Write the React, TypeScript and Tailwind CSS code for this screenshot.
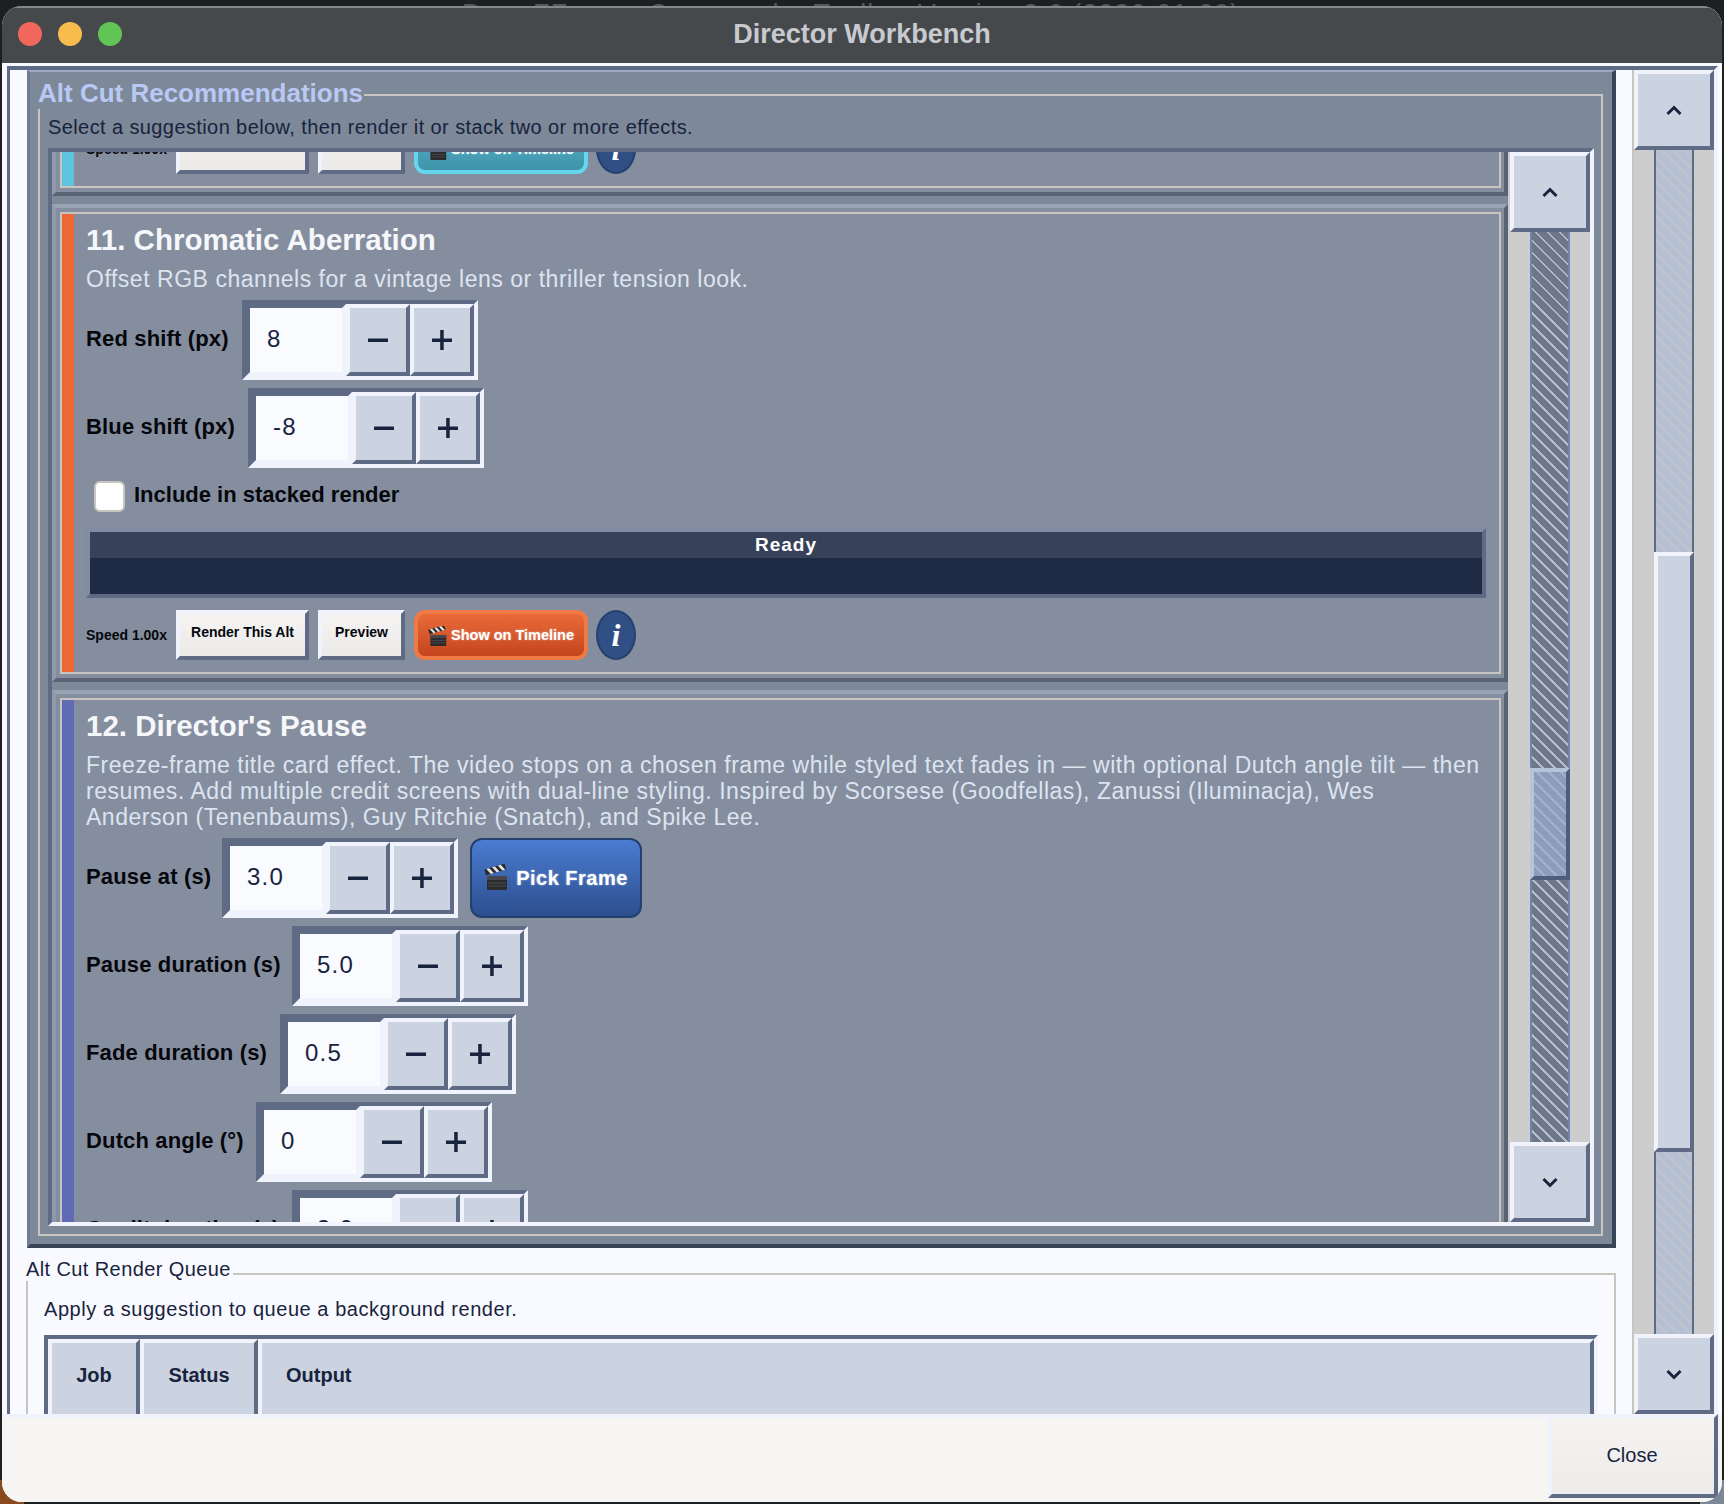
import type { ReactNode } from 'react'

const raised = 'border-4 border-t-[#f0f3fb] border-l-[#f0f3fb] border-r-[#5f6b85] border-b-[#5f6b85]'
const sunken = 'border-4 border-t-[#5f6b85] border-l-[#5f6b85] border-r-[#f0f3fb] border-b-[#f0f3fb]'

function Chevron({ down }: { down?: boolean }) {
  return (
    <svg width="16" height="11" viewBox="0 0 16 11" fill="none">
      <polyline
        points={down ? '1.5,2 8,8.5 14.5,2' : '1.5,9 8,2.5 14.5,9'}
        stroke="#18233d"
        strokeWidth="3"
      />
    </svg>
  )
}

function Clapper({ w, h }: { w: number; h: number }) {
  return (
    <svg width={w} height={h} viewBox="0 0 24 26" className="shrink-0">
      <g transform="rotate(-16 3 10)">
        <rect x="2" y="4" width="21" height="6" fill="#2a2a2c" />
        <path d="M4 4h3l3 6H7zM10 4h3l3 6h-3zM16 4h3l3 6h-3z" fill="#e4e4e4" />
      </g>
      <rect x="3" y="11" width="20" height="14" rx="1" fill="#2b2b2e" />
      <rect x="3" y="11" width="20" height="4" fill="#47474b" />
      <path d="M4 18h18M4 21h18" stroke="#56565a" strokeWidth="0.8" />
    </svg>
  )
}

function SpinBox({ value }: { value: string }) {
  return (
    <div className={`flex h-[80px] w-[236px] shrink-0 ${sunken}`}>
      <div className={`flex w-[100px] items-center pb-[2px] pl-[17px] text-[24px] tracking-[1.2px] text-[#18233d] bg-[#f9fbff] ${sunken}`}>
        {value}
      </div>
      <div className={`flex w-[64px] items-center justify-center bg-[#cbd3e0] ${raised}`}>
        <svg width="20" height="20" viewBox="0 0 20 20">
          <rect x="0" y="8.5" width="20" height="3.5" fill="#18233d" />
        </svg>
      </div>
      <div className={`flex w-[64px] items-center justify-center bg-[#cbd3e0] ${raised}`}>
        <svg width="20" height="20" viewBox="0 0 20 20">
          <rect x="0" y="8.5" width="20" height="3.5" fill="#18233d" />
          <rect x="8.2" y="0" width="3.5" height="20" fill="#18233d" />
        </svg>
      </div>
    </div>
  )
}

function SpinRow({ label, value, labelW, extra }: { label: string; value: string; labelW: string; extra?: ReactNode }) {
  return (
    <div className="flex items-center">
      <div className={`${labelW} shrink-0 pb-[4px] text-[22px] font-bold tracking-[0.15px] text-[#05070c]`}>{label}</div>
      <SpinBox value={value} />
      {extra}
    </div>
  )
}

function ActionRow({ timelineClass }: { timelineClass: string }) {
  return (
    <div className="flex h-[50px] items-center">
      <div className="w-[90px] shrink-0 text-[14px] font-bold text-[#05070c]">Speed 1.00x</div>
      <div className={`flex h-[50px] w-[133px] items-center justify-center bg-gradient-to-b from-[#f5f4f2] to-[#ebeae8] pb-[5px] text-[14px] font-bold text-[#05070c] ${raised}`}>
        Render This Alt
      </div>
      <div className={`ml-[9px] flex h-[50px] w-[87px] items-center justify-center bg-gradient-to-b from-[#f5f4f2] to-[#ebeae8] pb-[5px] text-[14px] font-bold text-[#05070c] ${raised}`}>
        Preview
      </div>
      <div className={`ml-[9px] flex h-[50px] w-[174px] items-center justify-center gap-[4px] rounded-[11px] border-[4px] pt-[2px] text-[14.5px] font-bold text-white [text-shadow:0_0_2px_rgba(255,255,255,0.6)] ${timelineClass}`}>
        <Clapper w={19} h={21} />
        Show on Timeline
      </div>
      <div className="ml-[8px] flex h-[50px] w-[40px] items-center justify-center rounded-[50%] border-2 border-[#26406f] bg-[#2f4f85] font-['Liberation_Serif',serif] text-[32px] font-bold italic leading-none text-white">
        i
      </div>
    </div>
  )
}

function Card({ accent, children, className }: { accent: string; children: ReactNode; className?: string }) {
  return (
    <div className={`border-4 border-t-[#9aa3b3] border-l-[#8f99a9] border-r-[#5a6373] border-b-[#5a6373] bg-[#858e9e] p-[4px] pr-[3px] ${className ?? ''}`}>
      <div className="flex h-full border-2 border-[#c8c4be]">
        <div className={`w-[12px] shrink-0 ${accent}`} />
        <div className="flex min-w-0 flex-1 flex-col pl-[12px] pr-[13px]">{children}</div>
      </div>
    </div>
  )
}

function ScrollBar({
  upper,
  thumb,
  lower,
  groove,
  thumbClass,
}: {
  upper: string
  thumb: string
  lower: string
  groove: string
  thumbClass: string
}) {
  return (
    <div className="flex h-full w-[80px] shrink-0 flex-col items-center bg-[#cdcdcd]">
      <div className={`flex h-[80px] w-[80px] shrink-0 items-center justify-center bg-[#cbd3e0] ${raised}`}>
        <Chevron />
      </div>
      <div className={`${upper} w-[40px] shrink-0 border-x-2 ${groove}`} />
      <div className={`${thumb} w-[40px] shrink-0 border-4 ${thumbClass}`} />
      <div className={`${lower} w-[40px] shrink-0 border-x-2 ${groove}`} />
      <div className={`flex h-[80px] w-[80px] shrink-0 items-center justify-center bg-[#cbd3e0] ${raised}`}>
        <Chevron down />
      </div>
    </div>
  )
}

const innerGroove =
  'border-[#6f84ad] bg-[repeating-linear-gradient(45deg,#6d7788_0px,#6d7788_6.5px,#b4bdcb_6.5px,#b4bdcb_8.5px)]'
const outerGroove =
  'border-[#5f6b85] bg-[repeating-linear-gradient(45deg,#b5c1d3_0px,#b5c1d3_6.5px,#bfc4cf_6.5px,#bfc4cf_8.5px)]'

export default function App() {
  return (
    <div className="relative h-[1504px] w-[1724px] overflow-hidden bg-[#1d2023] font-['Liberation_Sans',sans-serif]">
      <div className="absolute bottom-0 left-0 h-[24px] w-[24px] bg-[#8a4a1c]" />
      <div className="absolute bottom-0 right-0 h-[24px] w-[24px] bg-[#7b8794]" />
      <div className="absolute left-[462px] top-[1px] whitespace-nowrap text-[27px] leading-none tracking-[1px] text-[#55585b]">
        Dorn FFmpeg Commander Toolbar Version 2.6 (2026-01-09)
      </div>

      <div className="absolute bottom-[2px] left-[2px] right-[2px] top-[6px] flex flex-col overflow-hidden rounded-[20px] bg-[#f8faff]">
        {/* title bar */}
        <div className="relative flex h-[57px] shrink-0 items-center justify-center border-t-2 border-[#85888a] bg-[#45494c] pb-[3px]">
          <div className="absolute left-[16px] top-[14px] flex gap-[16px]">
            <div className="h-[24px] w-[24px] rounded-full bg-[#f1675c]" />
            <div className="h-[24px] w-[24px] rounded-full bg-[#f6bc4c]" />
            <div className="h-[24px] w-[24px] rounded-full bg-[#62c454]" />
          </div>
          <div className="text-[27px] font-bold text-[#c8cad0]">Director Workbench</div>
        </div>

        {/* main scroll frame */}
        <div className="ml-[5px] mr-[4px] mt-[3px] flex h-[1348px] shrink-0 overflow-hidden border-l-[3px] border-r-4 border-t-4 border-l-[#5f6b85] border-r-[#f0f3fb] border-t-[#5f6b85]">
          <div className="w-[1622px] shrink-0 pl-[17px]">
            {/* recommendations panel */}
            <div className="flex h-[1178px] w-[1589px] flex-col border-b-4 border-l-[3px] border-r-4 border-t-2 border-b-[#3a4459] border-l-[#6f7c94] border-r-[#3a4459] border-t-[#9aa8c2] bg-[#7d8898] pl-[8px] pr-[9px] pt-[22px]">
              <div className="relative h-[1142px] w-[1565px] border-2 border-[#c8c4be] pl-[8px]">
                <div className="absolute -left-[2px] -top-[17px] bg-[#7d8898] pb-[2px] pr-px text-[26px] font-bold leading-[28px] text-[#b9c8f5]">
                  Alt Cut Recommendations
                </div>
                <div className="pt-[19px] text-[20px] leading-[24px] tracking-[0.4px] text-[#18233d]">
                  Select a suggestion below, then render it or stack two or more effects.
                </div>
                <div className={`mt-[9px] flex h-[1078px] w-[1546px] ${sunken}`}>
                  <div className="w-[1458px] shrink-0 overflow-hidden bg-[#cdcdcd]">
                    <div className="-mt-[100px] flex w-[1456px] flex-col gap-[8px] bg-[#7d8898]">
                      <Card accent="bg-[#5ec3de]" className="h-[144px]">
                        <div className="mt-auto pb-[12px]">
                          <ActionRow timelineClass="border-[#66d6ee] bg-gradient-to-b from-[#54b4cb] to-[#3f93a9]" />
                        </div>
                      </Card>

                      <Card accent="bg-[#ee6636]" className="h-[478px]">
                        <div className="mt-[10px] h-[32px] text-[29.5px] font-bold leading-[32px] text-[#f5f7fb]">
                          11. Chromatic Aberration
                        </div>
                        <div className="mt-[10px] text-[23px] leading-[26px] tracking-[0.53px] text-[#dde4f0]">
                          Offset RGB channels for a vintage lens or thriller tension look.
                        </div>
                        <div className="mt-[8px] flex flex-col gap-[8px]">
                          <SpinRow label="Red shift (px)" value="8" labelW="w-[156px]" />
                          <SpinRow label="Blue shift (px)" value="-8" labelW="w-[162px]" />
                        </div>
                        <div className="mt-[13px] flex h-[31px] items-center pl-[8px]">
                          <div className="h-[31px] w-[31px] rounded-[6px] border-2 border-[#c8c4be] bg-white" />
                          <div className="ml-[9px] pb-[4px] text-[22px] font-bold text-[#05070c]">Include in stacked render</div>
                        </div>
                        <div className="mt-[16px] h-[70px] border-4 border-t-[#7f8ca3] border-l-[#7f8ca3] border-r-[#5f6b85] border-b-[#5f6b85] bg-[#1f2a44]">
                          <div className="flex h-[26px] items-center justify-center bg-[#374159] text-[19px] font-bold tracking-[1px] text-white">
                            Ready
                          </div>
                        </div>
                        <div className="mt-[12px]">
                          <ActionRow timelineClass="border-[#f07a45] bg-gradient-to-b from-[#ea6a38] to-[#c4451e]" />
                        </div>
                      </Card>

                      <Card accent="bg-[#5f6bb5]" className="h-[700px]">
                        <div className="mt-[10px] h-[32px] text-[29.5px] font-bold leading-[32px] text-[#f5f7fb]">
                          12. Director's Pause
                        </div>
                        <div className="mt-[10px] text-[23px] leading-[26px] tracking-[0.53px] text-[#dde4f0]">
                          Freeze-frame title card effect. The video stops on a chosen frame while styled text fades in — with optional Dutch angle tilt — then
                          <br />
                          resumes. Add multiple credit screens with dual-line styling. Inspired by Scorsese (Goodfellas), Zanussi (Iluminacja), Wes
                          <br />
                          Anderson (Tenenbaums), Guy Ritchie (Snatch), and Spike Lee.
                        </div>
                        <div className="mt-[8px] flex flex-col gap-[8px]">
                          <SpinRow
                            label="Pause at (s)"
                            value="3.0"
                            labelW="w-[136px]"
                            extra={
                              <div className="ml-[12px] flex h-[80px] w-[172px] items-center justify-center gap-[8px] rounded-[12px] border-2 border-[#24406f] bg-gradient-to-b from-[#4b7cd2] to-[#2c4f8f] text-[20px] font-bold tracking-[0.5px] text-white [text-shadow:0_0_2px_rgba(255,255,255,0.6)]">
                                <Clapper w={24} h={28} />
                                Pick Frame
                              </div>
                            }
                          />
                          <SpinRow label="Pause duration (s)" value="5.0" labelW="w-[206px]" />
                          <SpinRow label="Fade duration (s)" value="0.5" labelW="w-[194px]" />
                          <SpinRow label="Dutch angle (°)" value="0" labelW="w-[170px]" />
                          <SpinRow label="Credit duration (s)" value="3.0" labelW="w-[206px]" />
                        </div>
                      </Card>
                    </div>
                  </div>
                  <ScrollBar
                    upper="h-[536px]"
                    thumb="h-[112px]"
                    lower="h-[262px]"
                    groove={innerGroove}
                    thumbClass="border-t-[#b5c4da] border-l-[#b5c4da] border-r-[#4e5d7c] border-b-[#4e5d7c] bg-[repeating-linear-gradient(45deg,#8c9dba_0px,#8c9dba_6.5px,#a3b2cc_6.5px,#a3b2cc_8.5px)]"
                  />
                </div>
              </div>
            </div>

            {/* render queue */}
            <div className="relative -ml-px mt-[25px] h-[300px] w-[1590px] border-2 border-[#c8c4be] pl-[16px]">
              <div className="absolute -left-[2px] -top-[18px] bg-[#f8faff] pr-[2px] text-[20px] leading-[24px] tracking-[0.4px] text-[#18233d]">
                Alt Cut Render Queue
              </div>
              <div className="pt-[22px] text-[20px] leading-[24px] tracking-[0.55px] text-[#18233d]">
                Apply a suggestion to queue a background render.
              </div>
              <div className={`mt-[14px] flex h-[120px] w-[1554px] ${sunken}`}>
                <div className={`flex h-[81px] w-[92px] items-center justify-center bg-[#cbd3e0] pb-[10px] text-[20px] font-bold text-[#18233d] ${raised}`}>
                  Job
                </div>
                <div className={`flex h-[81px] w-[118px] items-center justify-center bg-[#cbd3e0] pb-[10px] text-[20px] font-bold text-[#18233d] ${raised}`}>
                  Status
                </div>
                <div className={`flex h-[81px] flex-1 items-center bg-[#cbd3e0] pb-[10px] pl-[24px] text-[20px] font-bold text-[#18233d] ${raised}`}>
                  Output
                </div>
              </div>
            </div>
          </div>
          <div className="h-full border-l-2 border-[#c8c4be]">
            <ScrollBar
              upper="h-[402px]"
              thumb="h-[600px]"
              lower="h-[182px]"
              groove={outerGroove}
              thumbClass="border-t-[#f0f3fb] border-l-[#f0f3fb] border-r-[#5f6b85] border-b-[#5f6b85] bg-[#cbd3e0]"
            />
          </div>
        </div>

        {/* footer */}
        <div className="relative z-10 flex flex-1 justify-end border-t-4 border-[#f0f3fb] bg-[#f6f5f3] pb-[4px] pr-[4px]">
          <div className="-mt-[4px] flex w-[170px] items-center justify-center border-4 border-t-[#f0f3fb] border-l-[#f0f3fb] border-r-[#5f6b85] border-b-[#5f6b85] bg-gradient-to-b from-[#f4f3f1] to-[#edecea] pb-[2px] pr-[2px] text-[20px] text-[#18233d]">
            Close
          </div>
        </div>
      </div>
    </div>
  )
}
